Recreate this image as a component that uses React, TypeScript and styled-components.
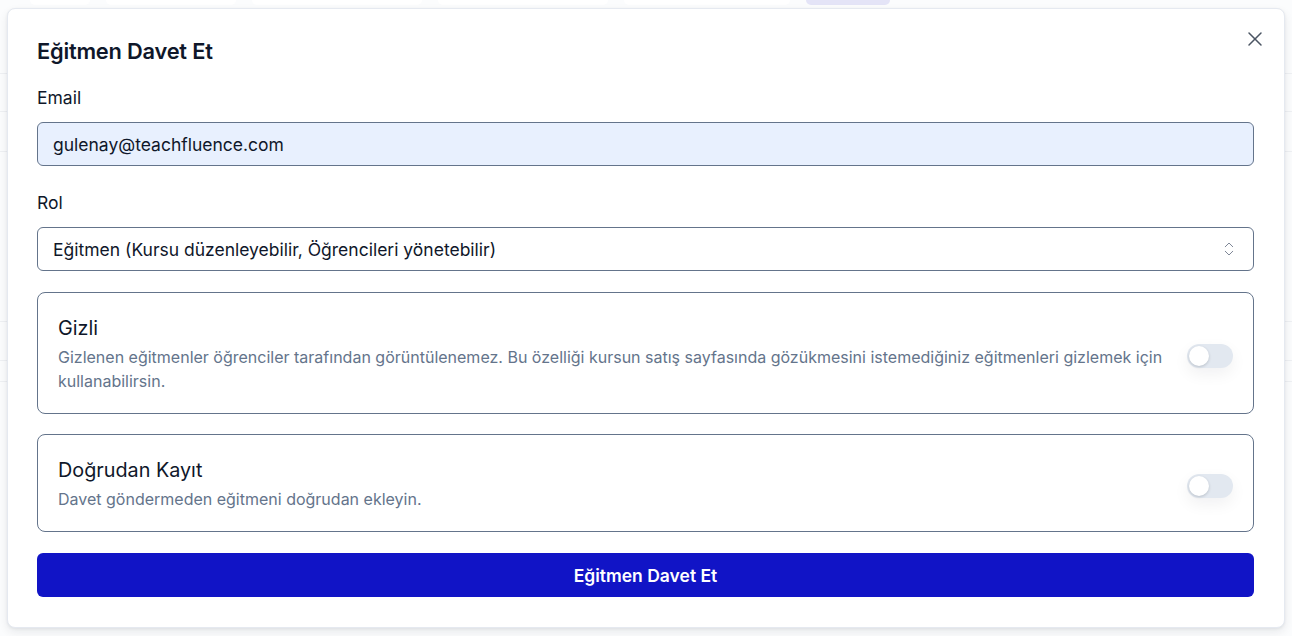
import styled, { createGlobalStyle } from 'styled-components';
import { X, ChevronsUpDown } from 'lucide-react';
import { useState } from 'react';

const GlobalStyle = createGlobalStyle`
  html, body {
    margin: 0;
    padding: 0;
    background: #fbfcfd;
    font-family: Inter, 'Noto Sans', sans-serif;
    color: #0f172a;
  }
  * {
    box-sizing: border-box;
  }
`;

const Page = styled.div`
  width: 1292px;
  height: 636px;
  overflow: hidden;
  position: relative;
  background: #fbfcfd;
`;

const TabBar = styled.div`
  display: flex;
  gap: 16px;
  padding: 0 0 0 30px;
  height: 6px;
`;

const Tab = styled.div<{ $w: number; $active?: boolean }>`
  width: ${(p) => p.$w}px;
  height: 5px;
  border-radius: 0 0 8px 8px;
  background: ${(p) => (p.$active ? '#e4e4f7' : '#ffffff')};
`;

const BgRows = styled.div`
  display: flex;
  flex-direction: column;
`;

const BgRow = styled.div<{ $h: number }>`
  height: ${(p) => p.$h}px;
  border-bottom: 1px solid #eef0f3;
`;

const Overlay = styled.div`
  position: absolute;
  inset: 0;
  padding: 8px 7px;
`;

const Modal = styled.div`
  width: 1278px;
  height: 620px;
  background: #ffffff;
  border-radius: 8px;
  border: 1px solid #e5e9f0;
  box-shadow: 0 4px 10px rgba(15, 23, 42, 0.08), 0 1px 3px rgba(15, 23, 42, 0.06);
  padding: 28px 30px 30px 29px;
  position: relative;
  display: flex;
  flex-direction: column;
`;

const CloseButton = styled.button`
  position: absolute;
  top: 18px;
  right: 17px;
  border: none;
  background: transparent;
  padding: 0;
  color: #4b5563;
  cursor: pointer;
  display: flex;
`;

const Title = styled.h2`
  margin: 0;
  font-size: 21.8px;
  line-height: 28px;
  font-weight: 600;
  letter-spacing: -0.2px;
  color: #0f172a;
`;

const Field = styled.div<{ $mt: number }>`
  display: flex;
  flex-direction: column;
  gap: 12px;
  margin-top: ${(p) => p.$mt}px;
`;

const Label = styled.label`
  font-size: 17.5px;
  line-height: 24px;
  font-weight: 400;
  color: #0f172a;
`;

const Input = styled.input`
  height: 44px;
  width: 100%;
  border: 1px solid #64748b;
  border-radius: 6px;
  background: #e8f0fe;
  padding: 0 15px;
  font-family: inherit;
  font-size: 17.5px;
  color: #0f172a;
  outline: none;
`;

const Select = styled.div`
  height: 44px;
  border: 1px solid #64748b;
  border-radius: 6px;
  background: #ffffff;
  padding: 0 15px 0 15px;
  display: flex;
  align-items: center;
  justify-content: space-between;
  font-size: 17.5px;
  color: #0f172a;
`;

const SelectIcon = styled.span`
  color: #7b8494;
  display: flex;
`;

const Card = styled.div<{ $mt: number }>`
  margin-top: ${(p) => p.$mt}px;
  border: 1px solid #64748b;
  border-radius: 8px;
  padding: 21px 20px 20px 20px;
  display: flex;
  align-items: center;
  gap: 20px;
`;

const CardText = styled.div`
  flex: 1;
  display: flex;
  flex-direction: column;
`;

const CardTitle = styled.div`
  font-size: 19.8px;
  line-height: 28px;
  font-weight: 400;
  color: #0f172a;
  margin-bottom: 3px;
`;

const CardDesc = styled.div`
  font-size: 16px;
  line-height: 24px;
  color: #64748b;
`;

const SwitchTrack = styled.button<{ $on: boolean }>`
  width: 46px;
  height: 24px;
  flex-shrink: 0;
  margin-top: 4px;
  border: none;
  border-radius: 12px;
  padding: 2px;
  background: ${(p) => (p.$on ? '#1114c6' : '#e2e8f0')};
  display: flex;
  justify-content: ${(p) => (p.$on ? 'flex-end' : 'flex-start')};
  box-shadow: 0 6px 16px rgba(15, 23, 42, 0.06);
  cursor: pointer;
`;

const SwitchThumb = styled.span`
  width: 20px;
  height: 20px;
  border-radius: 50%;
  background: #ffffff;
  box-shadow: 0 1px 3px rgba(15, 23, 42, 0.2);
`;

const SubmitButton = styled.button`
  margin-top: 21px;
  height: 45px;
  width: 100%;
  border: none;
  border-radius: 6px;
  background: #1114c6;
  color: #ffffff;
  font-family: inherit;
  font-size: 17.5px;
  font-weight: 600;
  cursor: pointer;
`;

const Switch = ({ on, onToggle }: { on: boolean; onToggle: () => void }) => (
  <SwitchTrack $on={on} onClick={onToggle}>
    <SwitchThumb />
  </SwitchTrack>
);

export default function App() {
  const [hidden, setHidden] = useState(false);
  const [direct, setDirect] = useState(false);

  return (
    <Page>
      <GlobalStyle />
      <TabBar>
        <Tab $w={60} />
        <Tab $w={130} />
        <Tab $w={170} />
        <Tab $w={170} />
        <Tab $w={166} />
        <Tab $w={84} $active />
      </TabBar>
      <BgRows>
        <BgRow $h={68} />
        <BgRow $h={38} />
        <BgRow $h={40} />
        <BgRow $h={170} />
        <BgRow $h={39} />
        <BgRow $h={21} />
      </BgRows>
      <Overlay>
        <Modal>
          <CloseButton aria-label="Kapat">
            <X size={24} strokeWidth={1.5} />
          </CloseButton>
          <Title>Eğitmen Davet Et</Title>
          <Field $mt={21}>
            <Label>Email</Label>
            <Input defaultValue="gulenay@teachfluence.com" />
          </Field>
          <Field $mt={25}>
            <Label>Rol</Label>
            <Select>
              <span>Eğitmen (Kursu düzenleyebilir, Öğrencileri yönetebilir)</span>
              <SelectIcon>
                <ChevronsUpDown size={18} strokeWidth={1.3} />
              </SelectIcon>
            </Select>
          </Field>
          <Card $mt={21}>
            <CardText>
              <CardTitle>Gizli</CardTitle>
              <CardDesc>
                Gizlenen eğitmenler öğrenciler tarafından görüntülenemez. Bu özelliği kursun satış sayfasında gözükmesini istemediğiniz eğitmenleri gizlemek için kullanabilirsin.
              </CardDesc>
            </CardText>
            <Switch on={hidden} onToggle={() => setHidden(!hidden)} />
          </Card>
          <Card $mt={20}>
            <CardText>
              <CardTitle>Doğrudan Kayıt</CardTitle>
              <CardDesc>Davet göndermeden eğitmeni doğrudan ekleyin.</CardDesc>
            </CardText>
            <Switch on={direct} onToggle={() => setDirect(!direct)} />
          </Card>
          <SubmitButton>Eğitmen Davet Et</SubmitButton>
        </Modal>
      </Overlay>
    </Page>
  );
}
